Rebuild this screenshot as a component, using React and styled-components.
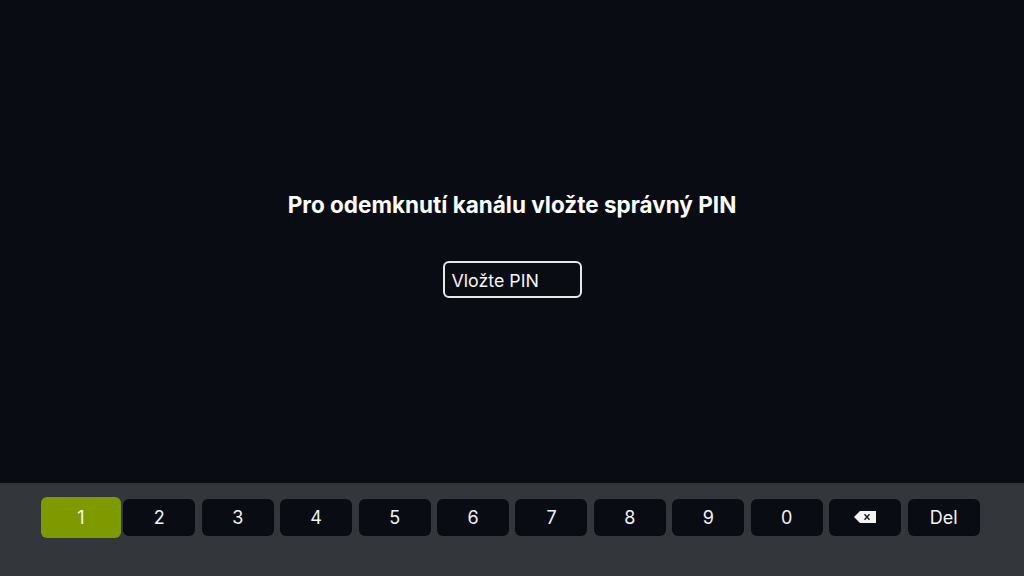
import React from "react";
import styled, { createGlobalStyle } from "styled-components";

const Global = createGlobalStyle`
  html, body { margin: 0; padding: 0; background: #090c12; }
  #root { width: 1024px; height: 576px; overflow: hidden; }
`;

const Screen = styled.div`
  width: 1024px;
  height: 576px;
  display: flex;
  flex-direction: column;
  background: #090c12;
  color: #fff;
  font-family: "Inter", "Liberation Sans", sans-serif;
`;

const Main = styled.main`
  flex: 1;
  display: flex;
  flex-direction: column;
  align-items: center;
  padding-top: 190px;
`;

const Title = styled.h1`
  margin: 0;
  font-size: 22.5px;
  line-height: 30px;
  font-weight: 700;
  white-space: nowrap;
`;

const PinField = styled.div`
  box-sizing: border-box;
  margin-top: 41px;
  width: 139px;
  height: 37px;
  padding: 1px 7px 0;
  display: flex;
  align-items: center;
  border: 2px solid #e8e8e8;
  border-radius: 6px;
  font-size: 17.8px;
  font-weight: 400;
  color: #f4f4f4;
`;

const Keyboard = styled.div`
  box-sizing: border-box;
  height: 93px;
  padding: 14px 0 0 41px;
  display: flex;
  align-items: flex-start;
  background: #33363b;
`;

const Key = styled.div`
  box-sizing: border-box;
  flex: none;
  display: flex;
  align-items: center;
  justify-content: center;
  padding-bottom: 1px;
  font-size: 18px;
  color: #f2f2f2;
  width: ${(p) => (p.$active ? "80px" : "72px")};
  height: ${(p) => (p.$active ? "41px" : "37px")};
  margin-top: ${(p) => (p.$active ? "0" : "2px")};
  margin-right: ${(p) => (p.$active ? "2.3px" : "6.45px")};
  border-radius: 6px;
  background: ${(p) => (p.$active ? "#7e9a00" : "#0a0c13")};
`;

const keys = ["2", "3", "4", "5", "6", "7", "8", "9", "0"];

const BackspaceIcon = () => (
  <svg width="22" height="12" viewBox="0 0 22 12">
    <path d="M6 0H22V12H6L0 6Z" fill="#f4f4f4" />
    <path d="M10.5 3.2L15.5 8.8M15.5 3.2L10.5 8.8" stroke="#14161c" strokeWidth="1.3" fill="none" />
  </svg>
);

export default function App() {
  return (
    <Screen>
      <Global />
      <Main>
        <Title>Pro odemknutí kanálu vložte správný PIN</Title>
        <PinField>Vložte PIN</PinField>
      </Main>
      <Keyboard>
        <Key $active>1</Key>
        {keys.map((k) => (
          <Key key={k}>{k}</Key>
        ))}
        <Key><BackspaceIcon /></Key>
        <Key>Del</Key>
      </Keyboard>
    </Screen>
  );
}
